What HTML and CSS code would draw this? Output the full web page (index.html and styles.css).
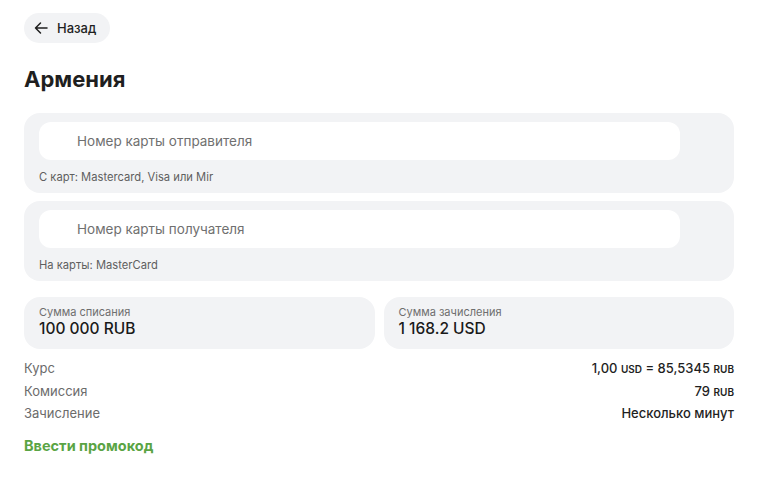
FILE: index.html
```html
<!DOCTYPE html>
<html lang="ru">

<head>
    <meta charset="UTF-8">
    <meta name="viewport" content="width=device-width, initial-scale=1.0">
    <title>Перевод — Армения</title>
    <link rel="stylesheet" href="styles.css">
</head>

<body>
    <div class="page">
        <button class="back-btn">
            <svg width="14" height="14" viewBox="0 0 14 14" fill="none">
                <path d="M13 7H1.5M6.5 2L1.5 7L6.5 12" stroke="#1f1f1f" stroke-width="1.5" stroke-linecap="round" stroke-linejoin="round" />
            </svg>
            <span>Назад</span>
        </button>

        <h1 class="title">Армения</h1>

        <div class="card-field">
            <div class="card-input">Номер карты отправителя</div>
            <div class="card-hint">С карт: Mastercard, Visa или Mir</div>
        </div>

        <div class="card-field">
            <div class="card-input">Номер карты получателя</div>
            <div class="card-hint">На карты: MasterCard</div>
        </div>

        <div class="amounts">
            <div class="amount">
                <div class="amount-label">Сумма списания</div>
                <div class="amount-value">100 000 RUB</div>
            </div>
            <div class="amount">
                <div class="amount-label">Сумма зачисления</div>
                <div class="amount-value">1 168.2 USD</div>
            </div>
        </div>

        <div class="details">
            <div class="row">
                <span class="row-label">Курс</span>
                <span class="row-value">1,00 <span class="cur">USD</span> = 85,5345 <span class="cur">RUB</span></span>
            </div>
            <div class="row">
                <span class="row-label">Комиссия</span>
                <span class="row-value">79 <span class="cur">RUB</span></span>
            </div>
            <div class="row">
                <span class="row-label">Зачисление</span>
                <span class="row-value">Несколько минут</span>
            </div>
        </div>

        <a class="promo" href="#">Ввести промокод</a>
    </div>
</body>

</html>
```

FILE: styles.css
```css
body {
    margin: 0;
    font-family: 'Inter', 'Liberation Sans', sans-serif;
    background-color: #fff;
    color: #1f1f1f;
}

.page {
    width: 710px;
    padding: 13px 0 0 24px;
}

.back-btn {
    display: flex;
    align-items: center;
    gap: 9px;
    height: 30px;
    padding: 0 14px 0 10px;
    border: none;
    border-radius: 15px;
    background-color: #f2f3f5;
    font-family: inherit;
    font-size: 13px;
    font-weight: 500;
    color: #1f1f1f;
    cursor: pointer;
}

.title {
    margin: 22px 0 0;
    font-size: 22px;
    font-weight: 700;
    line-height: 28px;
}

.card-field {
    margin-top: 8px;
    padding: 9px 54px 9px 15px;
    background-color: #f2f3f5;
    border-radius: 16px;
}

.title + .card-field {
    margin-top: 20px;
}

.card-input {
    height: 38px;
    padding-left: 38px;
    display: flex;
    align-items: center;
    background-color: #fff;
    border-radius: 12px;
    font-size: 13.5px;
    color: #707070;
}

.card-hint {
    margin-top: 10px;
    font-size: 11.2px;
    line-height: 14px;
    color: #5f5f5f;
}

.amounts {
    display: grid;
    grid-template-columns: 1fr 1fr;
    gap: 9px;
    margin-top: 16px;
}

.amount {
    height: 52px;
    box-sizing: border-box;
    padding: 8px 15px;
    background-color: #f2f3f5;
    border-radius: 16px;
}

.amount-label {
    font-size: 11px;
    line-height: 14px;
    color: #6e6e6e;
}

.amount-value {
    font-size: 15.5px;
    font-weight: 500;
    line-height: 20px;
    color: #1a1a1a;
}

.details {
    margin-top: 8px;
}

.row {
    display: flex;
    justify-content: space-between;
    height: 22.5px;
    align-items: center;
    font-size: 13px;
}

.row-label {
    color: #6b6b6b;
}

.row-value {
    color: #1f1f1f;
    font-weight: 500;
}

.cur {
    font-size: 10px;
    font-weight: 600;
}

.promo {
    display: inline-block;
    margin-top: 12px;
    font-size: 14.5px;
    font-weight: 700;
    color: #5aa444;
    text-decoration: none;
}
```
